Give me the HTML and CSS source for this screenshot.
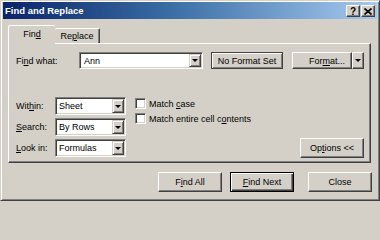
FILE: index.html
```html
<!DOCTYPE html>
<html>
<head>
<meta charset="utf-8">
<link rel="stylesheet" href="styles.css">
</head>
<body>
<div class="dialog">
  <div class="titlebar">
    <span class="title">Find and Replace</span>
    <div class="tb-buttons">
      <span class="tb-btn help">?</span>
      <span class="tb-btn close"><svg width="8" height="7" viewBox="0 0 8 7"><path d="M0.5 0.5 L7.5 6.5 M7.5 0.5 L0.5 6.5" stroke="#000" stroke-width="1.6" fill="none"/></svg></span>
    </div>
  </div>
  <div class="body">
    <div class="tabs">
      <div class="tab active">Fin<u>d</u></div>
      <div class="tab">Re<u>p</u>lace</div>
    </div>
    <div class="panel">
      <div class="row1">
        <span class="label lbl-find">Fi<u>n</u>d what:</span>
        <div class="combo combo-find"><span class="combo-text">Ann</span><span class="drop"><span class="tri"></span></span></div>
        <div class="noformat">No Format Set</div>
        <div class="split">
          <div class="btn fmt">For<u>m</u>at...</div>
          <div class="btn fmt-arrow"><span class="tri"></span></div>
        </div>
      </div>
      <div class="lower">
        <div class="opts">
          <span class="label">Wit<u>h</u>in:</span>
          <div class="combo"><span class="combo-text">Sheet</span><span class="drop"><span class="tri"></span></span></div>
          <span class="label"><u>S</u>earch:</span>
          <div class="combo"><span class="combo-text">By Rows</span><span class="drop"><span class="tri"></span></span></div>
          <span class="label"><u>L</u>ook in:</span>
          <div class="combo"><span class="combo-text">Formulas</span><span class="drop"><span class="tri"></span></span></div>
        </div>
        <div class="checks">
          <label class="check"><span class="box"></span><span>Match <u>c</u>ase</span></label>
          <label class="check"><span class="box"></span><span>Match entire cell c<u>o</u>ntents</span></label>
        </div>
        <div class="btn options">Op<u>t</u>ions &lt;&lt;</div>
      </div>
    </div>
    <div class="footer">
      <div class="btn fbtn">F<u>i</u>nd All</div>
      <div class="btn fbtn default"><u>F</u>ind Next</div>
      <div class="btn fbtn closebtn">Close</div>
    </div>
  </div>
</div>
</body>
</html>
```
FILE: styles.css
```css
html, body {
  margin: 0;
  padding: 0;
  background: #D4D0C8;
}
body {
  font-family: "Liberation Sans", Arial, sans-serif;
  font-size: 9px;
  color: #000;
}
u { text-decoration: underline; text-underline-offset: 1px; }

.dialog {
  width: 380px;
  height: 201px;
  box-sizing: border-box;
  border: 1px solid;
  border-color: #D4D0C8 #404040 #404040 #D4D0C8;
  box-shadow: inset 1px 1px #fff, inset -1px -1px #808080;
  padding: 1px 2px 2px 2px;
  background: #D4D0C8;
  display: flex;
  flex-direction: column;
}

.titlebar {
  height: 17px;
  background: linear-gradient(to right, #0A246A 0%, #3A6EA5 45%, #A6CAF0 100%);
  display: flex;
  align-items: center;
  justify-content: space-between;
  padding: 0 2px 0 2px;
}
.title {
  color: #fff;
  font-weight: bold;
  font-size: 9.5px;
  letter-spacing: 0;
}
.tb-buttons {
  display: flex;
  gap: 1px;
  margin-top: 1px;
}
.tb-btn {
  width: 14px;
  height: 12px;
  box-sizing: border-box;
  background: #D4D0C8;
  border: 1px solid;
  border-color: #fff #404040 #404040 #fff;
  box-shadow: inset -1px -1px #808080;
  display: flex;
  align-items: center;
  justify-content: center;
  font-weight: bold;
  font-size: 10px;
  line-height: 1;
}
.tb-btn.help { padding-top: 1px; }

.body {
  flex: 1;
  padding: 6px 6px 0 5px;
  display: flex;
  flex-direction: column;
}

.tabs {
  display: flex;
  align-items: flex-end;
  height: 18px;
  position: relative;
  z-index: 2;
}
.tab {
  box-sizing: border-box;
  height: 15px;
  width: 45px;
  border: 1px solid;
  border-color: #fff #404040 transparent #fff;
  border-bottom: none;
  border-radius: 2px 2px 0 0;
  box-shadow: inset -1px 0 #808080;
  display: flex;
  align-items: center;
  justify-content: center;
  padding-bottom: 1px;
  background: #D4D0C8;
}
.tab.active {
  width: 47px;
  height: 19px;
  margin-bottom: -1px;
  padding-bottom: 3px;
  border-right: none;
  box-shadow: none;
}
.tab.active + .tab {
  border-left: none;
}

.panel {
  box-sizing: border-box;
  height: 120px;
  border: 1px solid;
  border-color: #fff #404040 #404040 #fff;
  box-shadow: inset -1px -1px #808080;
  padding: 8px 6px 0 7px;
  display: flex;
  flex-direction: column;
}

.row1 {
  display: flex;
  align-items: center;
  height: 17px;
}
.lbl-find { width: 63px; }

.combo {
  box-sizing: border-box;
  height: 18px;
  background: #fff;
  border: 1px solid;
  border-color: #808080 #fff #fff #808080;
  box-shadow: inset 1px 1px #404040, inset -1px -1px #D4D0C8;
  padding: 1px;
  display: flex;
  align-items: stretch;
}
.combo-text {
  flex: 1;
  display: flex;
  align-items: center;
  padding-left: 2px;
}
.drop {
  width: 12px;
  box-sizing: border-box;
  background: #D4D0C8;
  border: 1px solid;
  border-color: #D4D0C8 #404040 #404040 #D4D0C8;
  box-shadow: inset 1px 1px #fff, inset -1px -1px #808080;
  display: flex;
  align-items: center;
  justify-content: center;
}
.tri {
  width: 0;
  height: 0;
  border-left: 3px solid transparent;
  border-right: 3px solid transparent;
  border-top: 3px solid #000;
}
.combo-find {
  width: 124px;
  height: 17px;
}
.combo-find .combo-text { padding-left: 3px; }

.noformat {
  box-sizing: border-box;
  margin-left: 8px;
  width: 72px;
  height: 17px;
  border: 1px solid #404040;
  box-shadow: inset 1px 1px #fff, inset -1px -1px #808080;
  display: flex;
  align-items: center;
  justify-content: center;
}

.btn {
  box-sizing: border-box;
  background: #D4D0C8;
  border: 1px solid;
  border-color: #fff #404040 #404040 #fff;
  box-shadow: inset -1px -1px #808080;
  display: flex;
  align-items: center;
  justify-content: center;
}
.split {
  display: flex;
  margin-left: 9px;
  height: 17px;
}
.fmt {
  width: 60px;
  padding-left: 10px;
}
.fmt-arrow {
  width: 12px;
}

.lower {
  margin-top: 28px;
  display: flex;
  align-items: flex-start;
}
.opts {
  display: grid;
  grid-template-columns: 39px 71px;
  grid-auto-rows: 18px;
  row-gap: 3px;
  align-items: center;
}
.checks {
  margin-left: 9px;
  margin-top: 1px;
  display: flex;
  flex-direction: column;
  gap: 4px;
}
.check {
  display: flex;
  align-items: center;
  gap: 3px;
  height: 11px;
}
.box {
  box-sizing: border-box;
  width: 11px;
  height: 11px;
  background: #fff;
  border: 1px solid;
  border-color: #808080 #fff #fff #808080;
  box-shadow: inset 1px 1px #404040, inset -1px -1px #D4D0C8;
}
.options {
  margin-left: auto;
  align-self: flex-end;
  width: 64px;
  height: 20px;
  margin-bottom: -1px;
}

.footer {
  margin-top: 9px;
  margin-right: -1px;
  display: flex;
  justify-content: flex-end;
}
.fbtn {
  width: 64px;
  height: 20px;
}
.fbtn.default {
  margin-left: 8px;
  border: 1px solid #000;
  box-shadow: inset 1px 1px #fff, inset -1px -1px #404040, inset -2px -2px #808080;
}
.closebtn {
  margin-left: 14px;
}
```
